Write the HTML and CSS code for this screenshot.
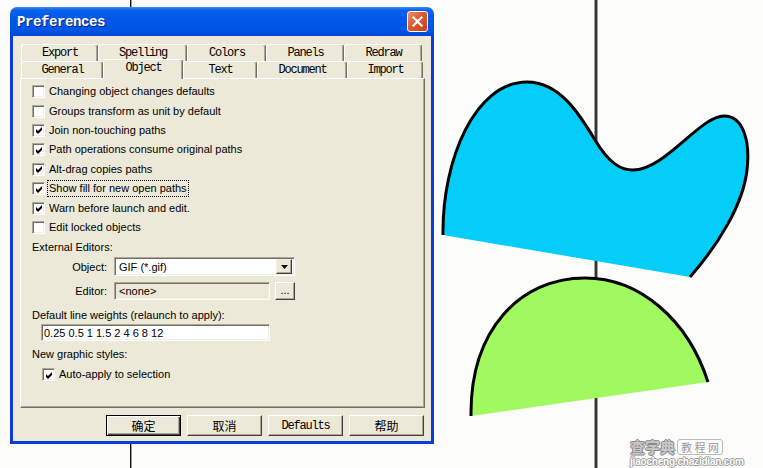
FILE: index.html
```html
<!DOCTYPE html>
<html>
<head>
<meta charset="utf-8">
<title>Preferences</title>
<link rel="stylesheet" href="styles.css">
</head>
<body>
<div class="desktop">
  <svg class="canvas" width="763" height="468" viewBox="0 0 763 468">
    <rect x="130" y="0" width="1" height="468" fill="#111"/>
    <rect x="131" y="0" width="1" height="468" fill="#999"/>
    <rect x="594" y="0" width="4" height="468" fill="#a0a0a0"/>
    <rect x="595" y="0" width="2" height="468" fill="#333"/>
    <path d="M443,235 C442,160 475,82 527,82 C560,82 580,115 595,140 C610,165 622,170 633,170 C665,170 700,116 724,116 C745,116 750,145 747,170 C743,205 718,245 690,277 L443,235 Z" fill="#04CDF7"/>
    <path d="M443,235 C442,160 475,82 527,82 C560,82 580,115 595,140 C610,165 622,170 633,170 C665,170 700,116 724,116 C745,116 750,145 747,170 C743,205 718,245 690,277" fill="none" stroke="#000" stroke-width="3"/>
    <path d="M471,416 C470,330 520,278 585,278 C640,278 688,320 708,382 L471,416 Z" fill="#A1F960"/>
    <path d="M471,416 C470,330 520,278 585,278 C640,278 688,320 708,382" fill="none" stroke="#000" stroke-width="3"/>
  </svg>

  <div class="window">
    <div class="titlebar">
      <span class="title">Preferences</span>
      <span class="close"><svg width="13" height="13" viewBox="0 0 13 13"><path d="M2.5 2.5 L10.5 10.5 M10.5 2.5 L2.5 10.5" stroke="#fff" stroke-width="2.2" stroke-linecap="square"/></svg></span>
    </div>
    <div class="frame">
      <div class="tabs">
        <div class="tabrow">
          <div class="tab t-export">Export</div>
          <div class="tab t-spelling">Spelling</div>
          <div class="tab t-colors">Colors</div>
          <div class="tab t-panels">Panels</div>
          <div class="tab t-redraw">Redraw</div>
        </div>
        <div class="tabrow front">
          <div class="tab t-general">General</div>
          <div class="tab t-object sel">Object</div>
          <div class="tab t-text">Text</div>
          <div class="tab t-document">Document</div>
          <div class="tab t-import">Import</div>
        </div>
      </div>
      <div class="panel">
        <div class="checks">
          <div class="chk"><span class="box"></span><span class="lbl">Changing object changes defaults</span></div>
          <div class="chk"><span class="box"></span><span class="lbl">Groups transform as unit by default</span></div>
          <div class="chk"><span class="box"><svg width="9" height="9" viewBox="0 0 9 9"><polygon points="1,3 3,5 7,1 7,4 3,8 1,6" fill="#000"/></svg></span><span class="lbl">Join non-touching paths</span></div>
          <div class="chk"><span class="box"><svg width="9" height="9" viewBox="0 0 9 9"><polygon points="1,3 3,5 7,1 7,4 3,8 1,6" fill="#000"/></svg></span><span class="lbl">Path operations consume original paths</span></div>
          <div class="chk"><span class="box"><svg width="9" height="9" viewBox="0 0 9 9"><polygon points="1,3 3,5 7,1 7,4 3,8 1,6" fill="#000"/></svg></span><span class="lbl">Alt-drag copies paths</span></div>
          <div class="chk"><span class="box"><svg width="9" height="9" viewBox="0 0 9 9"><polygon points="1,3 3,5 7,1 7,4 3,8 1,6" fill="#000"/></svg></span><span class="lbl focus">Show fill for new open paths</span></div>
          <div class="chk"><span class="box"><svg width="9" height="9" viewBox="0 0 9 9"><polygon points="1,3 3,5 7,1 7,4 3,8 1,6" fill="#000"/></svg></span><span class="lbl">Warn before launch and edit.</span></div>
          <div class="chk"><span class="box"></span><span class="lbl">Edit locked objects</span></div>
        </div>
        <div class="sect">External Editors:</div>
        <div class="frow">
          <span class="flabel">Object:</span>
          <div class="select">GIF (*.gif)<span class="dd"><svg width="7" height="4" viewBox="0 0 7 4"><polygon points="0,0 7,0 3.5,4" fill="#000"/></svg></span></div>
        </div>
        <div class="frow editor">
          <span class="flabel">Editor:</span>
          <div class="efield">&lt;none&gt;</div>
          <div class="dots">...</div>
        </div>
        <div class="sect lw">Default line weights (relaunch to apply):</div>
        <div class="input">0.25 0.5 1 1.5 2 4 6 8 12</div>
        <div class="sect ng">New graphic styles:</div>
        <div class="chk auto"><span class="box"><svg width="9" height="9" viewBox="0 0 9 9"><polygon points="1,3 3,5 7,1 7,4 3,8 1,6" fill="#000"/></svg></span><span class="lbl">Auto-apply to selection</span></div>
      </div>
      <div class="btns">
        <div class="btn def cjk">确定</div>
        <div class="btn cjk">取消</div>
        <div class="btn mono">Defaults</div>
        <div class="btn cjk">帮助</div>
      </div>
    </div>
  </div>

  <div class="wm">
    <div class="wm-top"><span class="wm-a">查字典</span><span class="wm-b">教 程 网</span></div>
    <div class="wm-url">jiaocheng.chazidian.com</div>
  </div>
</div>
</body>
</html>
```

FILE: styles.css
```css
* { box-sizing: border-box; }
html, body { margin: 0; padding: 0; }
body {
  width: 763px; height: 468px; overflow: hidden;
  background: #FCFCFA;
  font-family: "Liberation Sans", Arial, sans-serif;
  font-size: 11px; color: #000;
}
.desktop { position: relative; width: 763px; height: 468px; }
.canvas { position: absolute; left: 0; top: 0; }

.window {
  position: absolute; left: 10px; top: 7px;
  width: 424px; height: 437px;
  display: flex; flex-direction: column;
}
.titlebar {
  height: 29px; flex: none;
  border-radius: 7px 7px 0 0;
  background: linear-gradient(#3F8CF3 0, #0A62EC 3px, #0058E8 40%, #0054E3 80%, #0046D2 100%);
  display: flex; align-items: center;
  padding: 1px 6px 0 7px;
}
.title {
  flex: 1;
  font-family: "Liberation Mono", monospace; font-weight: bold;
  font-size: 14px; letter-spacing: -0.4px;
  color: #fff; text-shadow: 1px 1px 0 #0A2A8A;
}
.close {
  width: 21px; height: 21px; margin-top: -1px;
  border: 1px solid #fff; border-radius: 3px;
  background: linear-gradient(135deg, #F09074 0%, #E0582E 45%, #C9421B 100%);
  display: flex; align-items: center; justify-content: center;
}
.frame {
  flex: 1;
  border: 3px solid #0A3CD6; border-top: 0;
  background: #ECE9D8;
  padding: 8px 6px 5px 7px;
  display: flex; flex-direction: column;
}

.tabs { height: 34px; flex: none; display: flex; flex-direction: column; }
.tabrow { display: flex; height: 17px; margin-left: 1px; align-items: flex-end; }
.tab {
  height: 17px;
  border: 1px solid #fff; border-bottom: 0;
  border-right-color: #716F64;
  border-radius: 3px 3px 0 0;
  box-shadow: inset -1px 0 #ACA899;
  background: #ECE9D8;
  font-family: "Liberation Mono", monospace; font-size: 12px; letter-spacing: -1.2px;
  text-align: center; line-height: 17px; padding-left: 1px;
  white-space: nowrap;
}
.t-export { width: 77px; }
.t-spelling { width: 89px; }
.t-colors { width: 79px; }
.t-panels { width: 78px; }
.t-redraw { width: 78px; }
.t-general { width: 82px; }
.t-object { width: 80px; }
.t-text { width: 74px; }
.t-document { width: 90px; }
.t-import { width: 76px; }
.tab.sel {
  height: 20px; margin-bottom: -1px;
  position: relative; z-index: 1;
  line-height: 17px;
}

.panel {
  width: 405px; height: 330px; flex: none;
  border: 1px solid #fff;
  border-right-color: #716F64; border-bottom-color: #716F64;
  box-shadow: inset -1px -1px #ACA899;
  padding: 3px 0 0 11px;
}
.chk { display: flex; align-items: center; height: 19.4px; gap: 4px; }
.box {
  width: 13px; height: 13px; flex: none;
  border: 1px solid; border-color: #ACA899 #fff #fff #ACA899;
  box-shadow: inset 1px 1px #716F64, inset -1px -1px #F1EFE2;
  background: #fff;
  display: flex; align-items: center; justify-content: center;
}
.box svg { display: block; margin: 1px 0 0 1px; }
.lbl { line-height: 13px; white-space: nowrap; }
.lbl.focus { outline: 1px dotted #000; outline-offset: 1px; }

.sect { margin-top: 3px; line-height: 14px; }
.frow { display: flex; align-items: center; gap: 7px; margin-top: 3px; }
.flabel { width: 75px; text-align: right; }
.select, .efield, .input {
  border: 1px solid; border-color: #ACA899 #fff #fff #ACA899;
  box-shadow: inset 1px 1px #716F64, inset -1px -1px #F1EFE2;
  display: flex; align-items: center;
  padding-left: 4px; white-space: nowrap;
}
.select { width: 181px; height: 19px; background: #fff; padding-right: 2px; }
.dd {
  margin-left: auto; width: 16px; height: 15px;
  background: #ECE9D8;
  border: 1px solid; border-color: #F1EFE2 #404040 #404040 #F1EFE2;
  box-shadow: inset -1px -1px #ACA899;
  display: flex; align-items: center; justify-content: center;
}
.frow.editor { margin-top: 6px; }
.efield { width: 156px; height: 18px; background: #ECE9D8; }
.dots {
  width: 20px; height: 18px; margin-left: -2px;
  border: 1px solid; border-color: #fff #404040 #404040 #fff;
  box-shadow: inset -1px -1px #ACA899;
  display: flex; align-items: center; justify-content: center;
  padding-bottom: 2px;
}
.sect.lw { margin-top: 8px; }
.input { width: 229px; height: 17px; margin: 2px 0 0 9px; background: #fff; padding-left: 2px; }
.sect.ng { margin-top: 6px; }
.chk.auto { height: 13px; margin: 7px 0 0 10px; }

.btns { display: flex; justify-content: flex-end; gap: 6px; margin-top: 7px; padding-right: 1px; }
.btn {
  width: 75px; height: 21px;
  border: 1px solid; border-color: #fff #404040 #404040 #fff;
  box-shadow: inset -1px -1px #ACA899;
  display: flex; align-items: center; justify-content: center;
}
.btn.def {
  border-color: #000;
  box-shadow: inset 1px 1px #fff, inset -1px -1px #404040, inset -2px -2px #ACA899;
}
.cjk { font-family: "Noto Sans CJK SC", sans-serif; font-size: 12px; }
.mono { font-family: "Liberation Mono", monospace; font-size: 12px; letter-spacing: -1.2px; }

.wm { position: absolute; left: 630px; top: 437px; width: 124px; }
.wm-top { display: flex; align-items: center; gap: 2px; height: 19px; overflow: hidden; }
.wm-a {
  font-family: "Noto Sans CJK SC", sans-serif; font-weight: bold; font-size: 15px;
  color: #c8c8c8; line-height: 16px;
  text-shadow: 1px 0 #888, -1px 0 #888, 0 1px #888, 0 -1px #888;
}
.wm-b {
  font-family: "Noto Sans CJK SC", sans-serif; font-size: 11px; color: #999;
  border: 1px solid #bbb; border-radius: 3px; padding: 0 3px; line-height: 14px;
}
.wm-url {
  margin-top: 1px;
  font-family: "Liberation Sans", Arial, sans-serif; font-weight: bold; font-size: 10px;
  color: #fff; line-height: 10px; letter-spacing: -0.2px;
  text-shadow: 1px 0 #999, -1px 0 #999, 0 1px #999, 0 -1px #999;
}
```
